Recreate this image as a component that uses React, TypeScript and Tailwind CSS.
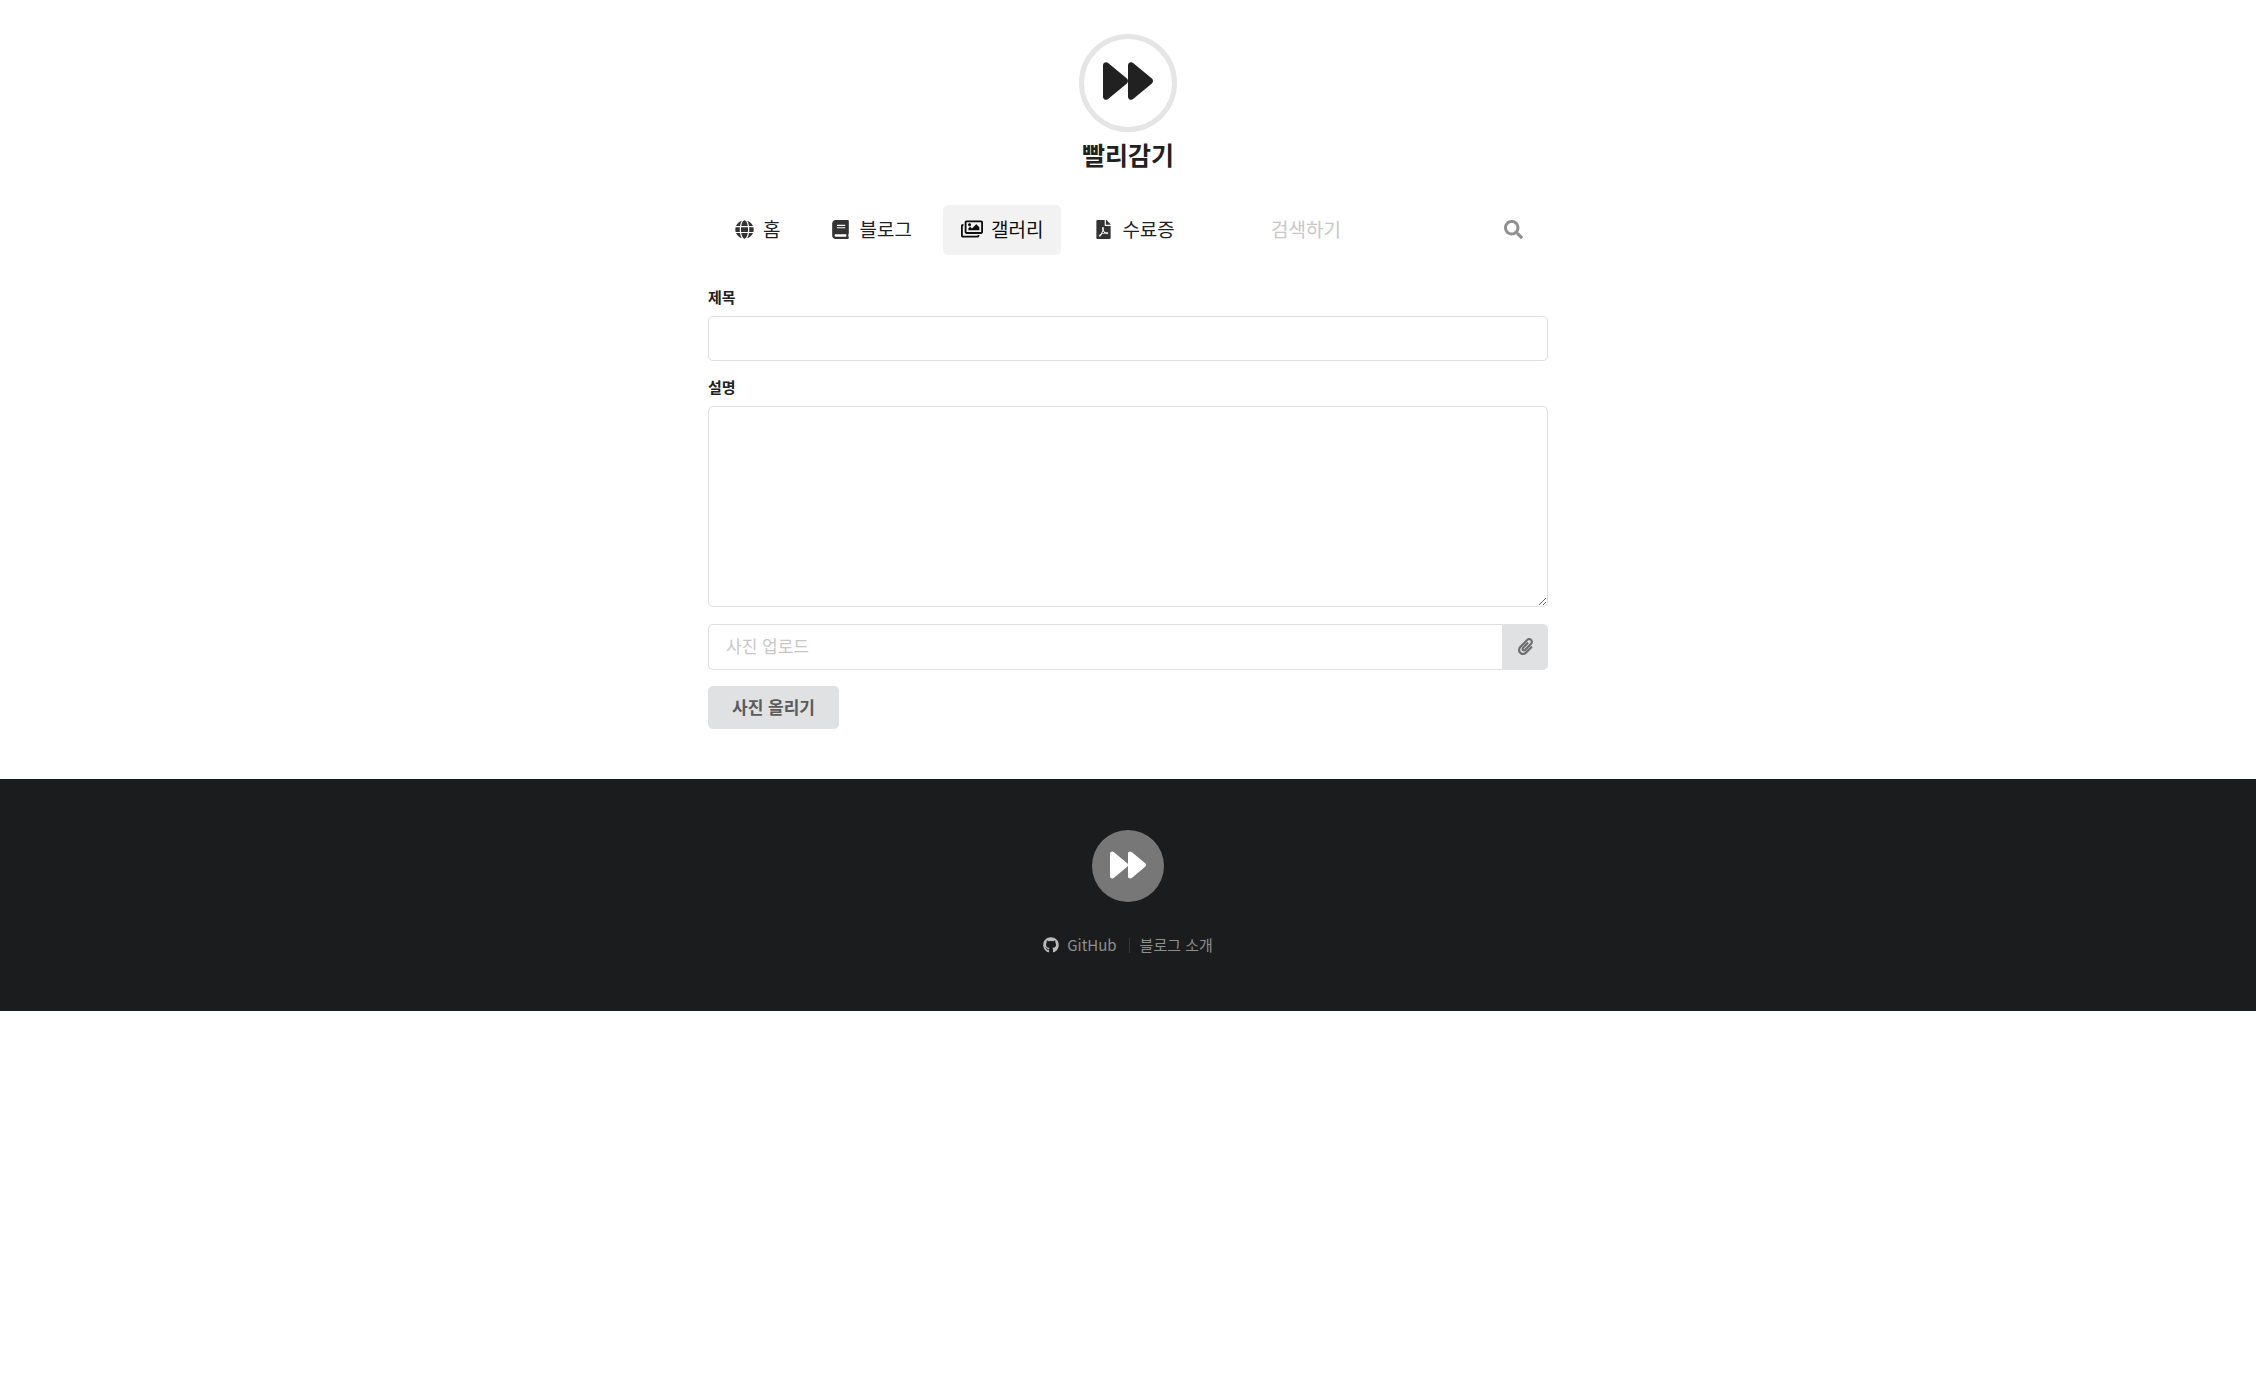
import type { ReactNode } from "react";
import {
  FaBook,
  FaFilePdf,
  FaForward,
  FaGithub,
  FaGlobe,
  FaPaperclip,
  FaRegImages,
  FaSearch,
} from "react-icons/fa";

function NavItem({ icon, label, active = false }: { icon: ReactNode; label: string; active?: boolean }) {
  return (
    <a
      href="#"
      aria-current={active ? "page" : undefined}
      className={
        active
          ? "flex h-[50px] items-center gap-2 rounded-[5px] bg-[#f2f2f2] px-[18px] pb-0.5 text-[#0d0d0d]"
          : "flex h-[50px] items-center gap-2 rounded-[5px] px-[18px] pb-0.5 text-[#212121]"
      }
    >
      <span className={active ? "flex w-[22px] justify-center" : "flex w-[22px] justify-center text-[#333]"}>{icon}</span>
      {label}
    </a>
  );
}

export default function App() {
  return (
    <div className="bg-white font-['Noto_Sans_CJK_KR',sans-serif] text-[#212121]" lang="ko">
      <div className="mx-auto max-w-[840px]">
        <header className="flex flex-col items-center pt-[34px]">
          <a href="#" aria-label="빨리감기 홈" className="flex size-[98px] items-center justify-center rounded-full border-[5px] border-[#e5e5e5] pb-1">
            <FaForward size={50} />
          </a>
          <h1 className="mt-1 text-[25px] leading-[36px] font-bold">빨리감기</h1>
        </header>

        <nav className="mt-[33px] flex justify-between px-[7px] text-[19px]">
          <div className="flex gap-[13px]">
            <NavItem icon={<FaGlobe size={19} />} label="홈" />
            <NavItem icon={<FaBook size={19} />} label="블로그" />
            <NavItem icon={<FaRegImages size={22} />} label="갤러리" active />
            <NavItem icon={<FaFilePdf size={19} />} label="수료증" />
          </div>
          <form className="flex w-[270px] items-center pr-[18px] pb-0.5" role="search">
            <input
              type="text"
              aria-label="검색하기"
              placeholder="검색하기"
              className="min-w-0 flex-1 bg-transparent outline-none placeholder:text-[#c7c7c7]"
            />
            <button type="button" aria-label="검색" className="text-[#909090]">
              <FaSearch size={19} />
            </button>
          </form>
        </nav>

        <form className="flex flex-col items-start pt-[32px] pb-[50px]">
          <label htmlFor="title" className="text-[15px] leading-[20px] font-bold">제목</label>
          <input id="title" type="text" className="mt-[9px] h-[45px] w-full rounded-[5px] border border-[#dededf] px-[17px] text-[17px] outline-none" />
          <label htmlFor="description" className="mt-[16px] text-[15px] leading-[20px] font-bold">설명</label>
          <textarea id="description" className="mt-[9px] block h-[201px] w-full resize-y rounded-[5px] border border-[#dededf] px-[17px] py-3 text-[17px] outline-none" />
          <div className="mt-[17px] flex h-[46px] w-full">
            <input
              type="text"
              readOnly
              aria-label="사진 업로드"
              placeholder="사진 업로드"
              className="min-w-0 flex-1 rounded-l-[5px] border border-r-0 border-[#dededf] px-[17px] pb-0.5 text-[17px] outline-none placeholder:text-[#c7c7c7]"
            />
            <button type="button" aria-label="사진 첨부" className="flex w-[46px] items-center justify-center rounded-r-[5px] bg-[#e0e1e2] pb-0.5 text-[#6b6c6c]">
              <FaPaperclip size={17} />
            </button>
          </div>
          <button type="button" className="mt-[16px] h-[43px] rounded-[5px] bg-[#e0e1e2] px-6 pb-0.5 text-[17px] font-bold text-[#5a5b5b]">
            사진 올리기
          </button>
        </form>
      </div>

      <footer className="flex h-[232px] flex-col items-center bg-[#1b1c1d] pt-[51px]">
        <a href="#" aria-label="빨리감기" className="flex size-[72px] items-center justify-center rounded-full bg-[#777] pb-0.5 text-white">
          <FaForward size={36} />
        </a>
        <div className="mt-[32px] flex items-center text-[15px] leading-[22px] text-[#8d8e8e]">
          <a href="#" className="flex items-center gap-2 pr-3">
            <FaGithub size={16} className="text-[#bbb]" />
            GitHub
          </a>
          <span className="h-[15px] w-px bg-[#363738]" />
          <a href="#" className="pl-[10px]">블로그 소개</a>
        </div>
      </footer>
    </div>
  );
}
